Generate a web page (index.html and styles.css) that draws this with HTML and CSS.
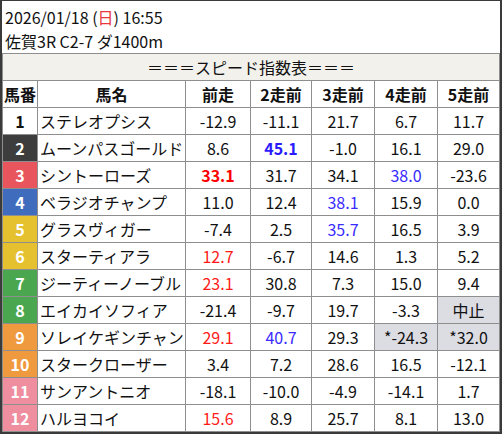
FILE: index.html
```html
<!DOCTYPE html>
<html lang="ja">
<head>
<meta charset="utf-8">
<link rel="stylesheet" href="styles.css">
</head>
<body>
<div class="frame">
  <div class="info">
    <div class="line">2026/01/18 (<span class="sun">日</span>) 16:55</div>
    <div class="line">佐賀3R C2-7 ダ1400m</div>
  </div>
  <div class="grid">
    <div class="title">＝＝＝スピード指数表＝＝＝</div>
    <div class="th">馬番</div><div class="th">馬名</div><div class="th">前走</div><div class="th">2走前</div><div class="th">3走前</div><div class="th">4走前</div><div class="th">5走前</div>

    <div class="no w1">1</div><div class="name">ステレオプシス</div><div class="v">-12.9</div><div class="v">-11.1</div><div class="v">21.7</div><div class="v">6.7</div><div class="v">11.7</div>
    <div class="no w2">2</div><div class="name">ムーンパスゴールド</div><div class="v">8.6</div><div class="v bb">45.1</div><div class="v">-1.0</div><div class="v">16.1</div><div class="v">29.0</div>
    <div class="no w3">3</div><div class="name">シントーローズ</div><div class="v br">33.1</div><div class="v">31.7</div><div class="v">34.1</div><div class="v b">38.0</div><div class="v">-23.6</div>
    <div class="no w4">4</div><div class="name">ベラジオチャンプ</div><div class="v">11.0</div><div class="v">12.4</div><div class="v b">38.1</div><div class="v">15.9</div><div class="v">0.0</div>
    <div class="no w5">5</div><div class="name">グラスヴィガー</div><div class="v">-7.4</div><div class="v">2.5</div><div class="v b">35.7</div><div class="v">16.5</div><div class="v">3.9</div>
    <div class="no w5">6</div><div class="name">スターティアラ</div><div class="v r">12.7</div><div class="v">-6.7</div><div class="v">14.6</div><div class="v">1.3</div><div class="v">5.2</div>
    <div class="no w7">7</div><div class="name">ジーティーノーブル</div><div class="v r">23.1</div><div class="v">30.8</div><div class="v">7.3</div><div class="v">15.0</div><div class="v">9.4</div>
    <div class="no w7">8</div><div class="name">エイカイソフィア</div><div class="v">-21.4</div><div class="v">-9.7</div><div class="v">19.7</div><div class="v">-3.3</div><div class="v gr">中止</div>
    <div class="no w9">9</div><div class="name">ソレイケギンチャン</div><div class="v r">29.1</div><div class="v b">40.7</div><div class="v">29.3</div><div class="v gr">*-24.3</div><div class="v gr">*32.0</div>
    <div class="no w9">10</div><div class="name">スタークローザー</div><div class="v">3.4</div><div class="v">7.2</div><div class="v">28.6</div><div class="v">16.5</div><div class="v">-12.1</div>
    <div class="no w11">11</div><div class="name">サンアントニオ</div><div class="v">-18.1</div><div class="v">-10.0</div><div class="v">-4.9</div><div class="v">-14.1</div><div class="v">1.7</div>
    <div class="no w11">12</div><div class="name">ハルヨコイ</div><div class="v r">15.6</div><div class="v">8.9</div><div class="v">25.7</div><div class="v">8.1</div><div class="v">13.0</div>
  </div>
</div>
</body>
</html>
```

FILE: styles.css
```css
html, body {
  margin: 0;
  padding: 0;
  background: #fff;
}
body {
  font-family: "Noto Sans CJK JP", "Noto Sans", sans-serif;
  font-size: 16px;
  color: #111;
}
.frame {
  width: 498px;
  border: 2px solid #3a3a3a;
  border-top-width: 1px;
  background: #fff;
}
.info {
  padding: 4px 3px 0;
  height: 48px;
}
.line {
  line-height: 24px;
  height: 24px;
  white-space: nowrap;
}
.sun {
  color: #e8383d;
}
.grid {
  display: grid;
  grid-template-columns: 34px 147px 64px 60px 62px 62px 61px;
  grid-auto-rows: 26px;
  gap: 1px;
  padding: 1px;
  background: #8e8e8e;
}
.grid > div {
  display: flex;
  align-items: center;
  justify-content: center;
  background: #fff;
  white-space: nowrap;
  line-height: 1;
}
.grid > .title {
  grid-column: 1 / -1;
  background: #f2f1ec;
}
.grid > .th {
  font-weight: bold;
}
.grid > .name {
  justify-content: flex-start;
  padding-left: 2px;
}
.grid > .no {
  font-weight: bold;
  color: #fff;
}
.grid > .w1 { background: #fff; color: #111; }
.grid > .w2 { background: #3d3d3d; }
.grid > .w3 { background: #e9555c; }
.grid > .w4 { background: #3f6cbd; }
.grid > .w5 { background: #e6c12f; }
.grid > .w7 { background: #4aa74f; }
.grid > .w9 { background: #ef9a3f; }
.grid > .w11 { background: #ee8e9f; }
.grid > .gr { background: #dcdce3; }
.r { color: #ff1a1a; }
.br { color: #ff0000; font-weight: bold; }
.b { color: #3a2bff; }
.bb { color: #2a1bff; font-weight: bold; }
```
